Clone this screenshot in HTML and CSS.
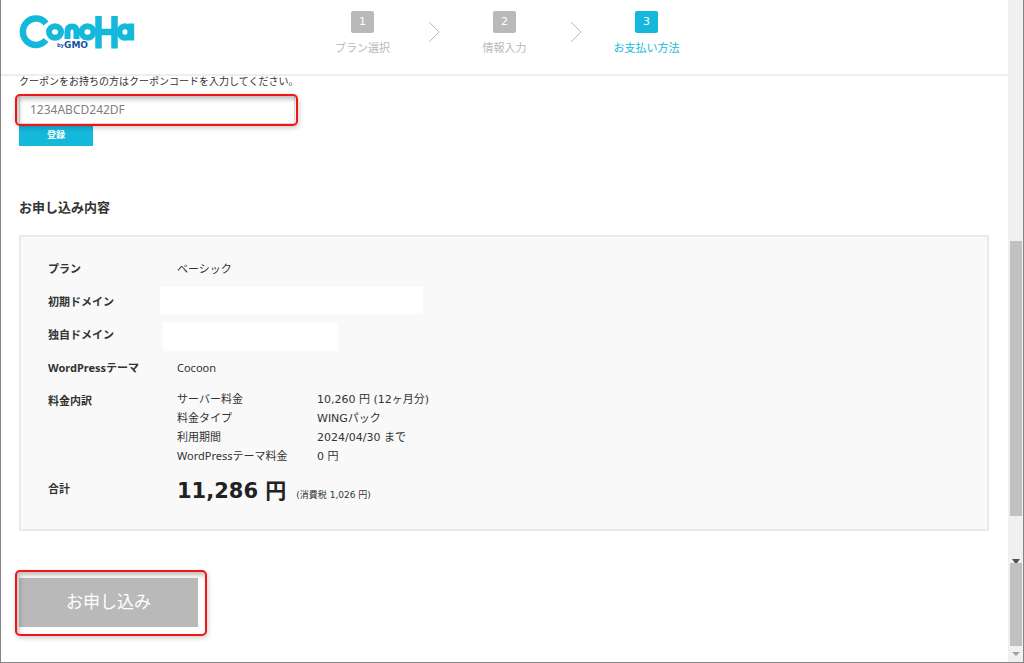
FILE: index.html
```
<!DOCTYPE html>
<html lang="ja">
<head>
<meta charset="utf-8">
<title>ConoHa お支払い方法</title>
<link rel="stylesheet" href="styles.css">
</head>
<body>
<div class="window">
  <div class="page">
    <header class="header">
      <svg class="logo" viewBox="0 0 115 35" role="img" aria-label="ConoHa by GMO">
        <g fill="none" stroke="#14b8db" stroke-width="6">
          <path d="M26 8.500A13 13.200 0 1 0 26 25" stroke-width="6.500"/>
          <ellipse cx="35" cy="17" rx="6" ry="5.800"/>
          <path d="M47.500 24V16.500Q47.500 11.500 52 11.500T56.500 16.500V24"/>
          <ellipse cx="67.500" cy="17" rx="6" ry="5.800"/>
          <path d="M78.500 1V33.500M94.500 1V33.500M78.500 17H94.500" stroke-width="6.500"/>
          <ellipse cx="105" cy="17" rx="5.500" ry="5.800"/>
          <path d="M111.200 8.500V25.500"/>
        </g>
        <g fill="#1453a4" stroke="#fff" stroke-width="2" paint-order="stroke">
          <text class="logo-by" x="37" y="32">by</text>
          <text class="logo-gmo" x="44" y="33">GMO</text>
        </g>
      </svg>
      <ol class="steps">
        <li class="step"><span class="num">1</span>プラン選択</li>
        <li class="arrow" aria-hidden="true"><svg width="12" height="22" viewBox="0 0 12 22"><path d="M1 1L11 11L1 21"/></svg></li>
        <li class="step"><span class="num">2</span>情報入力</li>
        <li class="arrow" aria-hidden="true"><svg width="12" height="22" viewBox="0 0 12 22"><path d="M1 1L11 11L1 21"/></svg></li>
        <li class="step current" aria-current="step"><span class="num">3</span>お支払い方法</li>
      </ol>
    </header>
    <main class="main">
      <form>
        <div class="coupon">
          <label for="coupon">クーポンをお持ちの方はクーポンコードを入力してください。</label>
          <div class="highlight highlight-field">
            <input class="field" id="coupon" type="text" value="1234ABCD242DF">
          </div>
          <button class="register" type="button">登録</button>
        </div>
        <h2 class="title">お申し込み内容</h2>
        <dl class="summary">
          <dt>プラン</dt><dd>ベーシック</dd>
          <dt>初期ドメイン</dt><dd><span class="blank"></span></dd>
          <dt>独自ドメイン</dt><dd><span class="blank blank-short"></span></dd>
          <dt>WordPressテーマ</dt><dd>Cocoon</dd>
          <dt>料金内訳</dt>
          <dd>
            <table class="prices">
              <tr><th scope="row">サーバー料金</th><td>10,260 円 (12ヶ月分)</td></tr>
              <tr><th scope="row">料金タイプ</th><td>WINGパック</td></tr>
              <tr><th scope="row">利用期間</th><td>2024/04/30 まで</td></tr>
              <tr><th scope="row">WordPressテーマ料金</th><td>0 円</td></tr>
            </table>
          </dd>
          <dt>合計</dt>
          <dd class="total"><strong>11,286 円</strong><small>(消費税 1,026 円)</small></dd>
        </dl>
        <div class="highlight highlight-submit">
          <button class="submit" type="submit">お申し込み</button>
        </div>
      </form>
    </main>
  </div>
  <div class="scrollbar" aria-hidden="true">
    <div class="thumb"></div>
    <svg class="mark" width="8" height="4" viewBox="0 0 8 4"><path d="M0 0H8L5 4H3Z" fill="#505050"/></svg>
    <div class="thumb thumb-outer"></div>
    <svg class="mark mark-end" width="8" height="4" viewBox="0 0 8 4"><path d="M0 0H8L4 4Z" fill="#a0a0a0"/></svg>
  </div>
</div>
</body>
</html>
```
FILE: styles.css
```
* { box-sizing: border-box; }
body {
  margin: 0;
  color: #333;
  background: #fff;
  font: 11px/19px "Noto Sans", "Noto Sans CJK JP", sans-serif;
}
button, input { font-family: inherit; }
.window {
  display: flex;
  min-height: 100vh;
  border: 1px solid #858585;
  border-top: 0;
}
.page { flex: 1; min-width: 0; }

.header {
  display: flex;
  align-items: flex-start;
  height: 76px;
  padding: 11px 19px 0;
  border-bottom: 2px solid #eee;
}
.logo { width: 115px; height: 35px; margin-top: 4px; overflow: visible; }
.logo-by { font: bold 6px "Noto Sans", sans-serif; }
.logo-gmo { font: bold 9px "DejaVu Sans", sans-serif; }
.steps {
  display: grid;
  grid-template-columns: repeat(5, 71px);
  margin: 0 0 0 192px;
  padding: 0;
  list-style: none;
}
.step {
  display: flex;
  flex-direction: column;
  align-items: center;
  gap: 5px;
  color: #b9b9b9;
  white-space: nowrap;
}
.num {
  width: 23px;
  height: 22px;
  border-radius: 2px;
  background: #b9b9b9;
  color: #fff;
  font-family: "DejaVu Sans", sans-serif;
  line-height: 22px;
  text-align: center;
}
.current { color: #14b8db; }
.current .num { background: #14b8db; }
.arrow { padding-top: 10px; text-align: center; }
.arrow path { fill: none; stroke: #bbb; }

.main { padding: 0 19px 26px 18px; }
.coupon { display: flex; flex-direction: column; align-items: flex-start; }
.coupon label { font-size: 10px; line-height: 10px; margin-bottom: 9px; }

.highlight { position: relative; display: flex; width: max-content; }
.highlight::after {
  content: "";
  position: absolute;
  border: 2px solid #f21515;
  border-radius: 5px;
  box-shadow: 1px 2px 5px #0003, inset 2px 3px 5px #0004;
  pointer-events: none;
}
.highlight-field::after { inset: -1px -3px -2px -4px; }
.highlight-submit::after { inset: -8px -9px -9px -4px; }
.field {
  width: 276px;
  height: 29px;
  padding: 0 10px;
  border: 1px solid #ddd;
  background: #fff;
  color: #808080;
  font-size: 12px;
}
.register {
  width: 74px;
  height: 22px;
  padding: 0 0 2px;
  border: 0;
  background: #14b8db;
  color: #fff;
  font-size: 9px;
  font-weight: bold;
}
.title { margin: 51px 0 18px; font-size: 13px; line-height: 20px; }

.summary {
  display: grid;
  grid-template-columns: 129px 1fr;
  row-gap: 14px;
  margin: 0;
  padding: 22px 27px 24px;
  border: 2px solid #eaeaea;
  background: #f9f9f9;
}
.summary dt { font-weight: bold; }
.summary dd { margin: 0; }
.blank {
  display: block;
  width: 263px;
  height: 27px;
  margin: -5px 0 -3px -17px;
  background: #fff;
}
.blank-short { width: 175px; height: 29px; margin: -3px 0 -7px -14px; }
.prices { margin: -1px 0; border-collapse: collapse; }
.prices th { width: 140px; padding: 0; font-weight: normal; text-align: left; }
.prices td { padding: 0; font-family: "DejaVu Sans", "Noto Sans CJK JP", sans-serif; }
.prices th, .prices td { height: 19px; line-height: 18px; vertical-align: baseline; }
.total { display: flex; align-items: baseline; gap: 10px; }
.total strong {
  color: #222;
  font: bold 21px/24px "DejaVu Sans", "Noto Sans CJK JP", sans-serif;
}
.total small { font: 9px/19px "DejaVu Sans", "Noto Sans CJK JP", sans-serif; }

.highlight-submit { margin-top: 47px; }
.submit {
  width: 179px;
  height: 49px;
  padding: 0 0 4px;
  border: 0;
  background: #b9b9b9;
  color: #fff;
  font-size: 17px;
}

.scrollbar {
  display: flex;
  flex-direction: column;
  align-items: center;
  width: 15px;
  padding: 241px 1px 6px;
  background: #f0f0f0;
}
.thumb { flex: 276; width: 12px; background: #c1c1c1; }
.mark { flex: none; margin-top: 43px; }
.thumb-outer { flex: 83; }
.mark-end { margin-top: 6px; }
```
